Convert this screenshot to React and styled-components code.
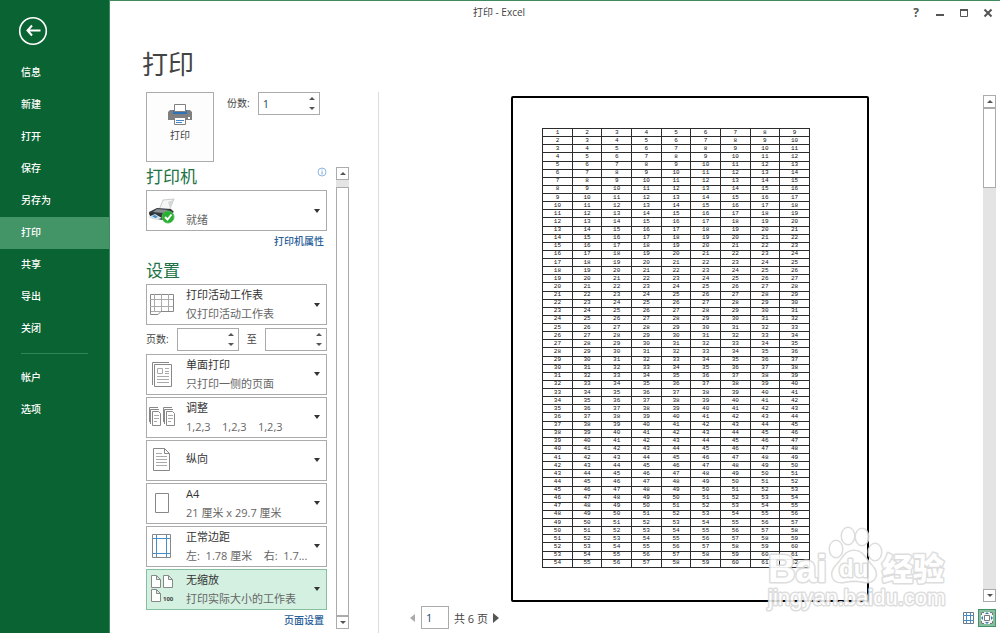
import React, { useState } from "react";
import styled, { createGlobalStyle } from "styled-components";

const GlobalStyle = createGlobalStyle`
  * {
    box-sizing: border-box;
  }
  body {
    margin: 0;
    background: #ffffff;
    color: #444444;
    font-family: "Open Sans", "Noto Sans CJK SC", sans-serif;
    font-size: 11px;
  }
  button, input, select {
    font: inherit;
    color: inherit;
  }
`;

const Shell = styled.div`
  position: relative;
  display: flex;
  height: 100vh;
  overflow: hidden;
`;

/* ---------- green navigation ---------- */

const Sidebar = styled.nav`
  flex: 0 0 110px;
  background: #0a6332;
  border-right: 1px solid #3f8b5f;
`;

const BackButton = styled.button`
  display: block;
  width: 30px;
  height: 30px;
  margin: 16px 0 11px 18px;
  padding: 0;
  border: 0;
  background: none;
  cursor: pointer;
`;

const NavItem = styled.a`
  display: block;
  height: 32px;
  padding-left: 21px;
  line-height: 31px;
  font-size: 10px;
  font-weight: 500;
  color: #ffffff;
  text-decoration: none;
  background: ${({ $active }) => ($active ? "#439467" : "transparent")};
`;

const NavDivider = styled.hr`
  height: 1px;
  margin: 8px 21px;
  border: 0;
  background: #2f8554;
`;

/* ---------- window ---------- */

const Main = styled.main`
  flex: 1;
  min-width: 0;
  display: flex;
  flex-direction: column;
  border-top: 1px solid #3f8b5f;
`;

const TitleBar = styled.header`
  display: flex;
  height: 24px;
`;

const WindowTitle = styled.div`
  flex: 1;
  line-height: 22px;
  text-align: center;
  font-size: 10px;
`;

const WindowButtons = styled.div`
  display: flex;
  padding-left: 16px;
`;

const WindowButton = styled.button`
  display: flex;
  align-items: center;
  justify-content: center;
  width: 24px;
  height: 23px;
  padding: 0;
  border: 0;
  background: none;
  color: #555555;
  font-size: 12px;
  font-weight: 700;
`;

const PageTitle = styled.h1`
  height: 67px;
  margin: 0;
  padding-left: 32px;
  line-height: 78px;
  font-size: 26px;
  font-weight: 400;
`;

const Body = styled.div`
  flex: 1;
  min-height: 0;
  display: flex;
`;

/* ---------- settings column ---------- */

const SettingsColumn = styled.section`
  display: flex;
  flex-direction: column;
  flex: 0 0 269px;
  padding: 0 29px 4px 36px;
  border-right: 1px solid #dcdcdc;
`;

const PrintRow = styled.div`
  display: flex;
  align-items: flex-start;
  height: 75px;
`;

const PrintButton = styled.button`
  display: flex;
  flex-direction: column;
  align-items: center;
  width: 68px;
  height: 70px;
  padding: 10px 0 0;
  gap: 2px;
  border: 1px solid #ababab;
  background: #fdfdfd;
  font-size: 10px;
`;

const FieldLabel = styled.label`
  font-size: 10px;
  line-height: 23px;
  white-space: nowrap;
`;

const CopiesField = styled.div`
  display: flex;
  gap: 8px;
  margin-left: 13px;
`;

const SpinBox = styled.div`
  display: flex;
  width: 62px;
  height: 23px;
  border: 1px solid #ababab;
  background: #ffffff;
`;

const SpinInput = styled.input`
  flex: 1;
  min-width: 0;
  padding: 0 4px;
  border: 0;
  outline: 0;
  background: none;
  color: #26466d;
`;

const SpinArrows = styled.div`
  display: flex;
  flex-direction: column;
  width: 13px;
`;

const SpinArrow = styled.button`
  flex: 1;
  display: flex;
  align-items: center;
  justify-content: center;
  padding: 0;
  border: 0;
  background: none;
`;

const SettingsScroll = styled.div`
  flex: 1;
  min-height: 0;
  display: flex;
  justify-content: space-between;
`;

const SettingsList = styled.div`
  display: flex;
  flex-direction: column;
  gap: 2px;
  width: 181px;
`;

const SectionHead = styled.div`
  display: flex;
  justify-content: space-between;
  align-items: flex-start;
  height: 22px;
`;

const SectionTitle = styled.h2`
  margin: 0;
  line-height: 19px;
  font-size: 17px;
  font-weight: 400;
  color: #217346;
`;

const InfoIcon = styled.svg`
  width: 10px;
  height: 10px;
`;

const PanelLink = styled.a`
  align-self: flex-end;
  height: ${({ $tall }) => ($tall ? "26px" : "18px")};
  padding-right: 3px;
  line-height: 17px;
  font-size: 10px;
  font-weight: 500;
  color: #2a6099;
  text-decoration: none;
`;

const OptionBox = styled.div`
  display: grid;
  grid-template-columns: 39px 1fr 16px;
  grid-template-rows: 19px 20px;
  height: 41px;
  border: 1px solid ${({ $active }) => ($active ? "#86bfa0" : "#ababab")};
  background: ${({ $active }) => ($active ? "#d3f0e0" : "#ffffff")};
`;

const OptionSelect = styled.select`
  grid-area: 1 / 1 / -1 / -1;
  width: 100%;
  height: 100%;
  padding: 0 16px ${({ $single }) => ($single ? "4px" : "20px")} 39px;
  border: 0;
  outline: 0;
  appearance: none;
  background: none;
  color: #333333;
`;

const OptionIcon = styled.svg`
  grid-area: 1 / 1 / -1 / 2;
  align-self: center;
  width: 30px;
  height: 30px;
  pointer-events: none;
`;

const OptionNote = styled.span`
  grid-area: 2 / 2 / 3 / 4;
  line-height: 19px;
  white-space: pre;
  color: #666666;
  pointer-events: none;
`;

const OptionArrow = styled.svg`
  grid-area: 1 / 3 / -1 / 4;
  align-self: center;
  width: 8px;
  height: 4px;
  margin-left: 3px;
  pointer-events: none;
`;

const PagesRow = styled.div`
  display: flex;
  align-items: center;
  justify-content: space-between;
  height: 25px;
`;

/* ---------- scrollbars ---------- */

const Scrollbar = styled.div`
  display: flex;
  flex-direction: column;
  flex: 0 0 13px;
  background: #e4e4e4;
`;

const ScrollButton = styled.button`
  display: flex;
  align-items: center;
  justify-content: center;
  height: 13px;
  padding: 0;
  border: 1px solid #ababab;
  background: #ffffff;
`;

const ScrollTrack = styled.div`
  flex: 1;
  display: flex;
  flex-direction: column;
  padding-top: ${({ $offset }) => $offset || 0}px;
`;

const ScrollThumb = styled.div`
  flex: 0 1 ${({ $size }) => $size};
  border: 1px solid #ababab;
  background: #ffffff;
`;

/* ---------- preview ---------- */

const Preview = styled.section`
  flex: 1;
  min-width: 0;
  display: flex;
  flex-direction: column;
  padding: 3px 4px 0 18px;
`;

const Canvas = styled.div`
  flex: 1;
  min-height: 0;
  display: flex;
`;

const Stage = styled.div`
  flex: 1;
  display: flex;
  justify-content: center;
  padding-top: 1px;
`;

const Paper = styled.div`
  height: 100%;
  aspect-ratio: 210 / 297;
  padding: 30px 57px 32px 29px;
  border: 2px solid #000000;
  border-radius: 2px;
`;

const Sheet = styled.table`
  width: 100%;
  height: 100%;
  table-layout: fixed;
  border-collapse: collapse;
  font-family: "Liberation Mono", monospace;
  font-size: 6px;
  line-height: 6px;
  color: #111111;

  td {
    padding: 0;
    border: 1px solid #2c2c2c;
    text-align: center;
    vertical-align: middle;
  }
`;

const Footer = styled.footer`
  display: flex;
  align-items: center;
  justify-content: space-between;
  height: 31px;
`;

const Pager = styled.div`
  display: flex;
  align-items: center;
  gap: 5px;
  padding-left: 13px;
`;

const PagerButton = styled.button`
  display: flex;
  width: 6px;
  height: 10px;
  padding: 0;
  border: 0;
  background: none;
`;

const PageInput = styled.input`
  width: 28px;
  height: 23px;
  padding: 0 4px;
  border: 1px solid #ababab;
  color: #26466d;
`;

const PageTotal = styled.label`
  width: 34px;
  font-size: 11px;
  white-space: nowrap;
`;

const ViewButtons = styled.div`
  display: flex;
`;

const ViewButton = styled.button`
  display: flex;
  align-items: center;
  justify-content: center;
  width: 18px;
  height: 18px;
  padding: 0;
  border: 1px solid ${({ $active }) => ($active ? "#439467" : "transparent")};
  background: ${({ $active }) => ($active ? "#86bfa0" : "none")};
`;

const Watermark = styled.svg`
  position: absolute;
  right: 48px;
  bottom: 19px;
  width: 188px;
  height: 90px;
  pointer-events: none;
`;

/* ---------- drawings ---------- */

const Triangle = ({ dir, color = "#555555" }) => {
  const shapes = {
    up: [6, 3, "M0 3L3 0L6 3Z"],
    down: [6, 3, "M0 0H6L3 3Z"],
    left: [6, 10, "M5 1V9L0 5Z"],
    right: [6, 10, "M0 0V10L6 5Z"],
  };
  const [w, h, d] = shapes[dir];
  return (
    <svg width={w} height={h} viewBox={`0 0 ${w} ${h}`} aria-hidden="true">
      <path d={d} fill={color} />
    </svg>
  );
};

const PrinterIcon = () => (
  <svg width="24" height="22" viewBox="0 0 24 22" aria-hidden="true">
    <path d="M2 7H22L24 9V17H0V9Z" fill="#7f7f7f" />
    <path d="M5 7H19V11H5Z" fill="#2f72b8" />
    <path d="M6.500 1.500H17.500V8.500H6.500Z" fill="#fff" stroke="#808080" />
    <path d="M6.500 14.500H17.500V21.500H6.500Z" fill="#fff" stroke="#808080" />
    <path d="M8 17.500H16M8 19.500H14" stroke="#4a86c5" />
    <rect x="20" y="14" width="2" height="2" fill="#fff" />
  </svg>
);

const iconArt = {
  printer: (
    <>
      <path d="M16 4L27 3L22 15L12 14Z" fill="#f4f5f5" stroke="#b5b5b5" strokeWidth=".7" />
      <path d="M21 6L26 4L23 12Z" fill="#d5d8da" />
      <path d="M2 16L10 12L24 13L27 16L16 22L3 20Z" fill="#353a3e" />
      <path d="M10 13L21 14L16 17L6 16Z" fill="#8a9195" />
      <path d="M2 17L16 20V24L4 22Z" fill="#252a2e" />
      <path d="M1 21L8 18L15 22L9 24Z" fill="#d9e2e7" />
      <path d="M5 20L8 19L11 21L8 22Z" fill="#3f8fd0" />
      <circle cx="21" cy="21" r="6" fill="#29b032" stroke="#57bd5c" />
      <path d="M18 21L20.500 23.500L24.500 18.500" fill="none" stroke="#fff" strokeWidth="2" />
    </>
  ),
  sheet: (
    <g fill="none" stroke="#888">
      <path d="M3.500 4.500H26.500V21.500H14L11 24.500H3.500Z" fill="#fff" />
      <path d="M3 9.500H26M3 16.500H26M7.500 4V21M14.500 4V21M21.500 4V21M4 21.500H14" stroke="#aaa" />
    </g>
  ),
  oneSide: (
    <g fill="none" stroke="#888">
      <path d="M5.500 26V3.500H22" />
      <path d="M7.500 5.500H24.500V27.500H7.500Z" fill="#fff" />
      <path d="M10.500 9.500H15.500V14.500H10.500ZM18 9.500H22M18 12.500H22M18 14.500H22M10 17.500H22M10 20.500H22M10 23.500H22" stroke="#aaa" />
    </g>
  ),
  collate: (
    <g fill="none" stroke="#888">
      {[0, 14].map((x) => (
        <g key={x} transform={`translate(${x} 0)`}>
          <path d="M2.500 20V5.500H11M3.500 22V7.500H12" />
          <path d="M5.500 9.500H11.500L13.500 11.500V23.500H5.500Z" fill="#fff" />
          <path d="M7 13.500H12M7 16.500H12M7 19.500H10" stroke="#aaa" />
        </g>
      ))}
    </g>
  ),
  portrait: (
    <g fill="none" stroke="#888">
      <path d="M6.500 3.500H17.500L22.500 8.500V25.500H6.500Z" fill="#fff" />
      <path d="M17.500 3.500V8.500H22.500" />
      <path d="M9 8.500H15M9 11.500H20M9 14.500H20M9 17.500H20M9 20.500H20" stroke="#aaa" />
    </g>
  ),
  paper: <path d="M8.500 5.500H21.500V24.500H8.500Z" fill="#fff" stroke="#888" />,
  margins: (
    <g fill="none">
      <path d="M5.500 3.500H23.500V26.500H5.500Z" stroke="#888" />
      <path d="M9.500 4V26M19.500 4V26M6 7.500H23M6 22.500H23" stroke="#4a8cc4" />
    </g>
  ),
  scale: (
    <g fill="#fff" stroke="#888">
      <path d="M4.500 1.500H9.500L13.500 5.500V13.500H4.500ZM9.500 1.500V5.500H13.500" />
      <path d="M16.500 1.500H21.500L25.500 5.500V13.500H16.500ZM21.500 1.500V5.500H25.500" />
      <path d="M4.500 15.500H9.500L13.500 19.500V27.500H4.500ZM9.500 15.500V19.500H13.500" />
      <text x="16" y="27" fontSize="6" fontWeight="700" fill="#444" stroke="none">
        100
      </text>
    </g>
  ),
};

/* ---------- parts ---------- */

const NumberField = ({ id, value = "", label }) => {
  const [text, setText] = useState(value);
  const step = (by) => setText(String(Math.max(1, (Number(text) || 0) + by)));
  return (
    <SpinBox>
      <SpinInput
        id={id}
        inputMode="numeric"
        value={text}
        onChange={(e) => setText(e.target.value)}
      />
      <SpinArrows>
        <SpinArrow aria-label={`${label} +`} onClick={() => step(1)}>
          <Triangle dir="up" />
        </SpinArrow>
        <SpinArrow aria-label={`${label} -`} onClick={() => step(-1)}>
          <Triangle dir="down" />
        </SpinArrow>
      </SpinArrows>
    </SpinBox>
  );
};

const Option = ({ icon, title, note, label, active }) => (
  <OptionBox $active={active}>
    <OptionSelect aria-label={label || title} $single={!note}>
      <option>{title}</option>
    </OptionSelect>
    <OptionIcon viewBox="0 0 30 30" aria-hidden="true">
      {iconArt[icon]}
    </OptionIcon>
    {note && <OptionNote>{note}</OptionNote>}
    <OptionArrow viewBox="0 0 8 4" aria-hidden="true">
      <path d="M1 0H7L4 4Z" fill="#333333" />
    </OptionArrow>
  </OptionBox>
);

const ScrollRail = ({ offset, size }) => (
  <Scrollbar>
    <ScrollButton aria-label="向上">
      <Triangle dir="up" />
    </ScrollButton>
    <ScrollTrack $offset={offset}>
      <ScrollThumb $size={size} />
    </ScrollTrack>
    <ScrollButton aria-label="向下">
      <Triangle dir="down" />
    </ScrollButton>
  </Scrollbar>
);

const navTop = ["信息", "新建", "打开", "保存", "另存为", "打印", "共享", "导出", "关闭"];
const navBottom = ["帐户", "选项"];

const options = [
  { icon: "oneSide", title: "单面打印", note: "只打印一侧的页面" },
  { icon: "collate", title: "调整", note: "1,2,3    1,2,3    1,2,3" },
  { icon: "portrait", title: "纵向" },
  { icon: "paper", title: "A4", note: "21 厘米 x 29.7 厘米" },
  { icon: "margins", title: "正常边距", note: "左:  1.78 厘米    右:  1.7..." },
  { icon: "scale", title: "无缩放", note: "打印实际大小的工作表", active: true },
];

// every row starts one higher than the row above it
const rows = Array.from({ length: 54 }, (_, r) =>
  Array.from({ length: 9 }, (_, c) => r + c + 1)
);

const App = () => {
  const [current, setCurrent] = useState("打印");
  const [page, setPage] = useState("1");

  const renderNav = (name) => (
    <NavItem
      key={name}
      href="#"
      $active={name === current}
      onClick={() => setCurrent(name)}
    >
      {name}
    </NavItem>
  );

  return (
    <Shell>
      <GlobalStyle />
      <Sidebar>
        <BackButton aria-label="返回">
          <svg width="30" height="30" viewBox="0 0 30 30" fill="none" stroke="#fff">
            <circle cx="15" cy="15" r="13.300" strokeWidth="1.600" />
            <path d="M22.500 14.500H10M14 9.500L9.500 14.500L14 19.500" strokeWidth="2" />
          </svg>
        </BackButton>
        {navTop.map(renderNav)}
        <NavDivider />
        {navBottom.map(renderNav)}
      </Sidebar>

      <Main>
        <TitleBar>
          <WindowTitle>打印 - Excel</WindowTitle>
          <WindowButtons>
            <WindowButton aria-label="帮助">?</WindowButton>
            <WindowButton aria-label="最小化">
              <svg width="10" height="10" viewBox="0 0 10 10">
                <path d="M1 6H9V8H1Z" fill="#555" />
              </svg>
            </WindowButton>
            <WindowButton aria-label="最大化">
              <svg width="10" height="10" viewBox="0 0 10 10">
                <path d="M1.500 1.500H8.500V8.500H1.500Z" fill="none" stroke="#555" />
                <path d="M1 1H9V3H1Z" fill="#555" />
              </svg>
            </WindowButton>
            <WindowButton aria-label="关闭窗口">
              <svg width="10" height="10" viewBox="0 0 10 10">
                <path d="M1.500 1.500L8.500 8.500M8.500 1.500L1.500 8.500" stroke="#555" strokeWidth="2" />
              </svg>
            </WindowButton>
          </WindowButtons>
        </TitleBar>
        <PageTitle>打印</PageTitle>

        <Body>
          <SettingsColumn>
            <PrintRow>
              <PrintButton>
                <PrinterIcon />
                打印
              </PrintButton>
              <CopiesField>
                <FieldLabel htmlFor="copies">份数:</FieldLabel>
                <NumberField id="copies" value="1" label="份数" />
              </CopiesField>
            </PrintRow>

            <SettingsScroll>
              <SettingsList>
                <SectionHead>
                  <SectionTitle>打印机</SectionTitle>
                  <InfoIcon viewBox="0 0 10 10" aria-hidden="true">
                    <circle cx="5" cy="5" r="4" fill="none" stroke="#8fb5e0" />
                    <path d="M5 4.500V7.500M5 2.500V3.500" stroke="#6b9fd6" />
                  </InfoIcon>
                </SectionHead>
                <Option icon="printer" title="" note="就绪" label="打印机" />
                <PanelLink href="#" $tall>
                  打印机属性
                </PanelLink>
                <SectionHead>
                  <SectionTitle>设置</SectionTitle>
                </SectionHead>
                <Option icon="sheet" title="打印活动工作表" note="仅打印活动工作表" />
                <PagesRow>
                  <FieldLabel htmlFor="from">页数:</FieldLabel>
                  <NumberField id="from" label="页数" />
                  <FieldLabel htmlFor="to">至</FieldLabel>
                  <NumberField id="to" label="至" />
                </PagesRow>
                {options.map((option) => (
                  <Option key={option.icon} {...option} />
                ))}
                <PanelLink href="#">页面设置</PanelLink>
              </SettingsList>
              <ScrollRail offset={7} size="100%" />
            </SettingsScroll>
          </SettingsColumn>

          <Preview>
            <Canvas>
              <Stage>
                <Paper>
                  <Sheet>
                    <tbody>
                      {rows.map((row) => (
                        <tr key={row[0]}>
                          {row.map((n) => (
                            <td key={n}>{n}</td>
                          ))}
                        </tr>
                      ))}
                    </tbody>
                  </Sheet>
                </Paper>
              </Stage>
              <ScrollRail size="80px" />
            </Canvas>
            <Footer>
              <Pager>
                <PagerButton aria-label="上一页">
                  <Triangle dir="left" color="#aaaaaa" />
                </PagerButton>
                <PageInput
                  id="page"
                  value={page}
                  onChange={(e) => setPage(e.target.value)}
                />
                <PageTotal htmlFor="page">共 6 页</PageTotal>
                <PagerButton aria-label="下一页">
                  <Triangle dir="right" />
                </PagerButton>
              </Pager>
              <ViewButtons>
                <ViewButton aria-label="显示边距">
                  <svg width="12" height="14" viewBox="0 0 12 14" fill="none">
                    <path d="M.5 1.500H10.500V12.500H.5Z" stroke="#777" />
                    <path d="M3.500 1V13M7.500 1V13M0 4.500H11M0 9.500H11" stroke="#4a8cc4" />
                  </svg>
                </ViewButton>
                <ViewButton aria-label="缩放到页面" $active>
                  <svg width="14" height="14" viewBox="0 0 14 14" fill="none">
                    <path d="M1 1H13V13H1Z" fill="#f5f5f5" />
                    <path d="M4.500 4.500H9.500V9.500H4.500Z" fill="#fff" stroke="#777" />
                    <path d="M1.500 4V1.500H4M10 1.500H12.500V4M12.500 10V12.500H10M4 12.500H1.500V10" stroke="#777" />
                    <path d="M5 3L7 1L9 3ZM5 11L7 13L9 11ZM3 5L1 7L3 9ZM11 5L13 7L11 9Z" fill="#3a78b5" />
                  </svg>
                </ViewButton>
              </ViewButtons>
            </Footer>
          </Preview>
        </Body>
      </Main>

      <Watermark viewBox="0 0 188 90" aria-hidden="true">
        <g
          fill="#ffffff"
          stroke="#dadada"
          strokeWidth="3"
          strokeLinejoin="round"
          paintOrder="stroke"
          opacity=".9"
          fontFamily="'Liberation Sans', 'Noto Sans CJK SC', sans-serif"
        >
          <text x="4" y="58" fontSize="38" fontWeight="700">
            Bai
          </text>
          <ellipse cx="72" cy="25" rx="6" ry="8" />
          <ellipse cx="84" cy="12" rx="6" ry="8" />
          <ellipse cx="98" cy="13" rx="6" ry="8" />
          <ellipse cx="111" cy="28" rx="6" ry="8" />
          <path d="M90 27C99 27 101 35 107 41C116 50 111 59 101 58C93 56 88 56 79 58C68 59 65 49 73 41C79 35 81 27 90 27Z" />
          <text x="75" y="53" fontSize="24" fontWeight="700">
            du
          </text>
          <text x="118" y="56" fontSize="31" fontWeight="900">
            经验
          </text>
          <text x="4" y="81" fontSize="22">
            jingyan.baidu.com
          </text>
        </g>
      </Watermark>
    </Shell>
  );
};

export default App;
